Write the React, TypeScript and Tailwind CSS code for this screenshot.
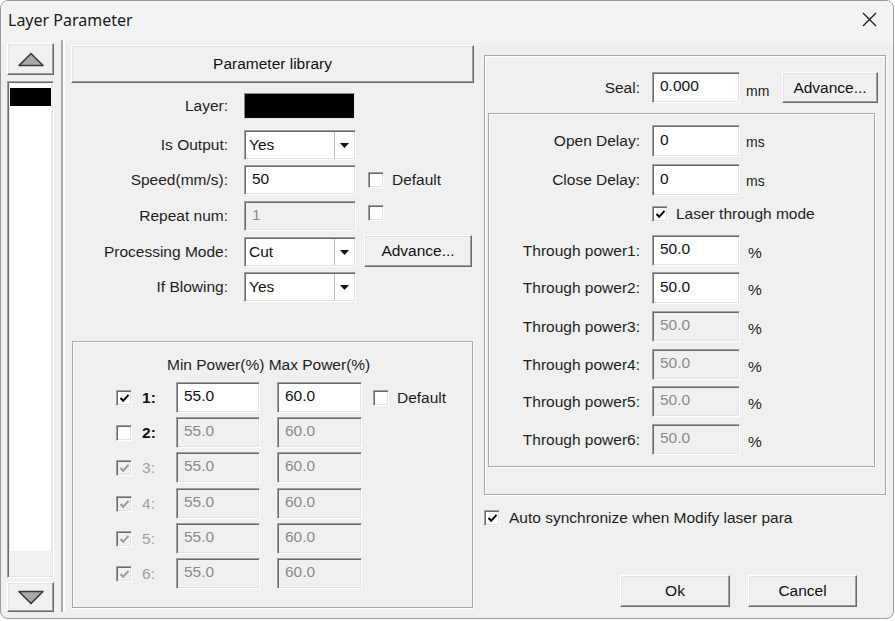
import React from "react";

const sunken =
  "border border-t-[#a0a0a0] border-l-[#a0a0a0] border-b-white border-r-white shadow-[inset_1px_1px_0_#696969,inset_-1px_-1px_0_#e3e3e3]";
const raised =
  "border border-t-white border-l-white border-b-[#696969] border-r-[#696969] shadow-[inset_-1px_-1px_0_#a0a0a0,inset_1px_1px_0_#e3e3e3]";
const group =
  "border border-[#a8a8a8] shadow-[inset_1px_1px_0_#ffffff,1px_1px_0_#ffffff]";

function Check({ checked, disabled }: { checked?: boolean; disabled?: boolean }) {
  return (
    <div
      className={`w-[16px] h-[16px] shrink-0 flex items-center justify-center ${sunken} ${
        disabled ? "bg-[#f0f0f0]" : "bg-white"
      }`}
    >
      {checked && (
        <svg width="11" height="10" viewBox="0 0 11 10">
          <path
            d="M1.5 5 L4.2 7.8 L9.5 1.8"
            fill="none"
            stroke={disabled ? "#9a9a9a" : "#000"}
            strokeWidth="2"
          />
        </svg>
      )}
    </div>
  );
}

function Field({
  value,
  className,
  disabled,
}: {
  value: string;
  className: string;
  disabled?: boolean;
}) {
  return (
    <div
      className={`shrink-0 flex items-center pl-[7px] pb-[3px] ${sunken} ${className} ${
        disabled ? "bg-[#f0f0f0] text-[#8a8a8a]" : "bg-white text-[#111]"
      }`}
    >
      {value}
    </div>
  );
}

function Select({ value }: { value: string }) {
  return (
    <div className={`w-[112px] h-[30px] shrink-0 bg-white flex ${sunken}`}>
      <span className="flex-1 pl-[4px] flex items-center text-[#111]">{value}</span>
      <div className="w-[20px] my-[1px] mr-[1px] border-l border-[#bdbdbd] flex items-center justify-center">
        <svg width="9" height="5" viewBox="0 0 9 5">
          <path d="M0 0 H9 L4.5 5 Z" fill="#111" />
        </svg>
      </div>
    </div>
  );
}

function Btn({ label, className }: { label: string; className: string }) {
  return (
    <div
      className={`shrink-0 flex items-center justify-center bg-[#f0f0f0] text-[#111] ${raised} ${className}`}
    >
      {label}
    </div>
  );
}

function Row({ label, children, className }: { label: string; children: React.ReactNode; className: string }) {
  return (
    <div className={`flex items-center ${className}`}>
      <span className="w-[157px] text-right text-[#1e1e1e] whitespace-nowrap">{label}</span>
      <div className="ml-[16px] flex items-center">{children}</div>
    </div>
  );
}

function PowerRow({
  n,
  checked,
  checkDisabled,
  fieldsEnabled,
  showDefault,
  className,
}: {
  n: number;
  checked: boolean;
  checkDisabled: boolean;
  fieldsEnabled: boolean;
  showDefault?: boolean;
  className: string;
}) {
  return (
    <div className={`flex items-center h-[31px] ${className}`}>
      <div className="ml-[43px]">
        <Check checked={checked} disabled={checkDisabled} />
      </div>
      <span
        className={`ml-[10px] w-[34px] ${
          checkDisabled ? "text-[#a0a0a0]" : "text-[#111] font-bold"
        }`}
      >
        {n}:
      </span>
      <Field value="55.0" className="w-[84px] h-[31px]" disabled={!fieldsEnabled} />
      <Field value="60.0" className="ml-[17px] w-[85px] h-[31px]" disabled={!fieldsEnabled} />
      {showDefault && (
        <>
          <div className="ml-[11px]">
            <Check />
          </div>
          <span className="ml-[8px] text-[#1e1e1e]">Default</span>
        </>
      )}
    </div>
  );
}

function RightRow({
  label,
  value,
  unit,
  disabled,
  className,
  unitClass,
}: {
  label: string;
  value: string;
  unit: string;
  disabled?: boolean;
  className: string;
  unitClass: string;
}) {
  return (
    <div className={`flex items-center ${className}`}>
      <span className="w-[151px] text-right text-[#1e1e1e] whitespace-nowrap">{label}</span>
      <Field value={value} className="ml-[12px] w-[88px] h-full" disabled={disabled} />
      <span className={`text-[#1e1e1e] ${unitClass}`}>{unit}</span>
    </div>
  );
}

function Arrow({ up }: { up?: boolean }) {
  return (
    <svg width="28" height="15" viewBox="0 0 28 15">
      <path
        d={up ? "M2 13.5 L14 1.5 L26 13.5 Z" : "M2 1.5 L14 13.5 L26 1.5 Z"}
        fill="#a8a8a8"
        stroke="#3a3a3a"
        strokeWidth="1.6"
        strokeLinejoin="round"
      />
    </svg>
  );
}

export default function App() {
  return (
    <div className="w-[895px] h-[621px] bg-[#ffffff]">
      <div
        className="w-[894px] h-[619px] bg-[#f0f0f0] border border-[#9a9a9a] rounded-[8px] flex flex-col overflow-hidden text-[15.5px] leading-[18px]"
        style={{ fontFamily: '"Liberation Sans", Arial, sans-serif' }}
      >
        {/* Title bar */}
        <div className="h-[42px] shrink-0 flex items-start justify-between bg-[#f3f3f3]">
          <span
            className="pl-[7px] pt-[8px] text-[16px] leading-[22px] text-[#1a1a1a]"
            style={{ fontFamily: '"Noto Sans", "Open Sans", sans-serif' }}
          >
            Layer Parameter
          </span>
          <svg className="mt-[11px] mr-[16px]" width="15" height="15" viewBox="0 0 15 15">
            <path d="M1 1 L14 14 M14 1 L1 14" stroke="#1a1a1a" strokeWidth="1.3" />
          </svg>
        </div>

        {/* Body */}
        <div className="flex flex-1 pl-[6px]">
          {/* Left strip */}
          <div className="w-[47px] flex flex-col">
            <div className={`h-[32px] flex items-center justify-center ${raised}`}>
              <Arrow up />
            </div>
            <div className={`mt-[6px] h-[497px] flex flex-col p-[2px] ${sunken} bg-[#f0f0f0]`}>
              <div className="flex-1 bg-white flex flex-col pt-[4px]">
                <div className="h-[18px] bg-black" />
              </div>
              <div className="h-[24px]" />
            </div>
            <div className={`mt-[4px] h-[30px] flex items-center justify-center ${raised}`}>
              <Arrow />
            </div>
          </div>

          {/* Separator */}
          <div className="ml-[7px] mt-[-3px] mb-[6px] w-[4px] flex">
            <div className="w-[2px] bg-[#a8a8a8]" />
            <div className="w-[2px] bg-white" />
          </div>

          {/* Middle column */}
          <div className="ml-[6px] w-[403px] flex flex-col">
            <Btn label="Parameter library" className="mt-[2px] h-[38px] w-[403px]" />

            <Row label="Layer:" className="mt-[10px] h-[26px]">
              <div className="w-[111px] h-[26px] bg-black border border-t-[#8a8a8a] border-l-[#8a8a8a] border-b-[#e8e8e8] border-r-[#e8e8e8]" />
            </Row>
            <Row label="Is Output:" className="mt-[11px] h-[30px]">
              <Select value="Yes" />
            </Row>
            <Row label="Speed(mm/s):" className="mt-[5px] h-[30px]">
              <Field value="50" className="w-[112px] h-[30px]" />
              <div className="ml-[12px]">
                <Check />
              </div>
              <span className="ml-[8px] text-[#1e1e1e]">Default</span>
            </Row>
            <Row label="Repeat num:" className="mt-[6px] h-[30px]">
              <Field value="1" className="w-[112px] h-[30px]" disabled />
              <div className="ml-[12px] mb-[6px]">
                <Check />
              </div>
            </Row>
            <Row label="Processing Mode:" className="mt-[6px] h-[30px]">
              <Select value="Cut" />
              <Btn label="Advance..." className="ml-[8px] w-[108px] h-[32px] mb-[2px]" />
            </Row>
            <Row label="If Blowing:" className="mt-[5px] h-[30px]">
              <Select value="Yes" />
            </Row>

            {/* Power group */}
            <div className={`mt-[39px] ml-[1px] w-[401px] h-[267px] flex flex-col ${group}`}>
              <div className="pt-[14px] pl-[94px] text-[#1e1e1e] whitespace-pre">
                Min Power(%) Max Power(%)
              </div>
              <PowerRow n={1} checked checkDisabled={false} fieldsEnabled showDefault className="mt-[8px]" />
              <PowerRow n={2} checked={false} checkDisabled={false} fieldsEnabled={false} className="mt-[4px]" />
              <PowerRow n={3} checked checkDisabled fieldsEnabled={false} className="mt-[4px]" />
              <PowerRow n={4} checked checkDisabled fieldsEnabled={false} className="mt-[5px]" />
              <PowerRow n={5} checked checkDisabled fieldsEnabled={false} className="mt-[4px]" />
              <PowerRow n={6} checked checkDisabled fieldsEnabled={false} className="mt-[4px]" />
            </div>
          </div>

          {/* Right column */}
          <div className="ml-[10px] w-[402px] flex flex-col">
            <div className={`mt-[12px] h-[440px] flex flex-col ${group}`}>
              <div className="mt-[16px] h-[31px] flex items-center">
                <span className="w-[155px] text-right text-[#1e1e1e]">Seal:</span>
                <Field value="0.000" className="ml-[12px] w-[88px] h-[31px]" />
                <span className="ml-[6px] w-[36px] pt-[6px] text-[14px] text-[#1e1e1e]">mm</span>
                <Btn label="Advance..." className="w-[96px] h-[31px]" />
              </div>

              <div className={`mt-[10px] ml-[3px] w-[387px] h-[354px] flex flex-col ${group}`}>
                <RightRow label="Open Delay:" value="0" unit="ms" className="mt-[11px] h-[32px]" unitClass="ml-[6px] pt-[2px] text-[14px]" />
                <RightRow label="Close Delay:" value="0" unit="ms" className="mt-[7px] h-[32px]" unitClass="ml-[6px] pt-[2px] text-[14px]" />
                <div className="mt-[10px] h-[16px] flex items-center">
                  <div className="ml-[163px]">
                    <Check checked />
                  </div>
                  <span className="ml-[8px] text-[#1e1e1e]">Laser through mode</span>
                </div>
                <RightRow label="Through power1:" value="50.0" unit="%" className="mt-[13px] h-[31px]" unitClass="ml-[8px] pt-[4px]" />
                <RightRow label="Through power2:" value="50.0" unit="%" className="mt-[6px] h-[32px]" unitClass="ml-[8px] pt-[4px]" />
                <RightRow label="Through power3:" value="50.0" unit="%" disabled className="mt-[7px] h-[31px]" unitClass="ml-[8px] pt-[4px]" />
                <RightRow label="Through power4:" value="50.0" unit="%" disabled className="mt-[7px] h-[31px]" unitClass="ml-[8px] pt-[4px]" />
                <RightRow label="Through power5:" value="50.0" unit="%" disabled className="mt-[6px] h-[31px]" unitClass="ml-[8px] pt-[4px]" />
                <RightRow label="Through power6:" value="50.0" unit="%" disabled className="mt-[7px] h-[31px]" unitClass="ml-[8px] pt-[4px]" />
              </div>
            </div>

            <div className="mt-[15px] h-[16px] flex items-center">
              <Check checked />
              <span className="ml-[9px] text-[#1e1e1e]">Auto synchronize when Modify laser para</span>
            </div>

            <div className="mt-[49px] flex">
              <Btn label="Ok" className="ml-[136px] w-[110px] h-[32px]" />
              <Btn label="Cancel" className="ml-[18px] w-[109px] h-[32px]" />
            </div>
          </div>
        </div>
      </div>
    </div>
  );
}
